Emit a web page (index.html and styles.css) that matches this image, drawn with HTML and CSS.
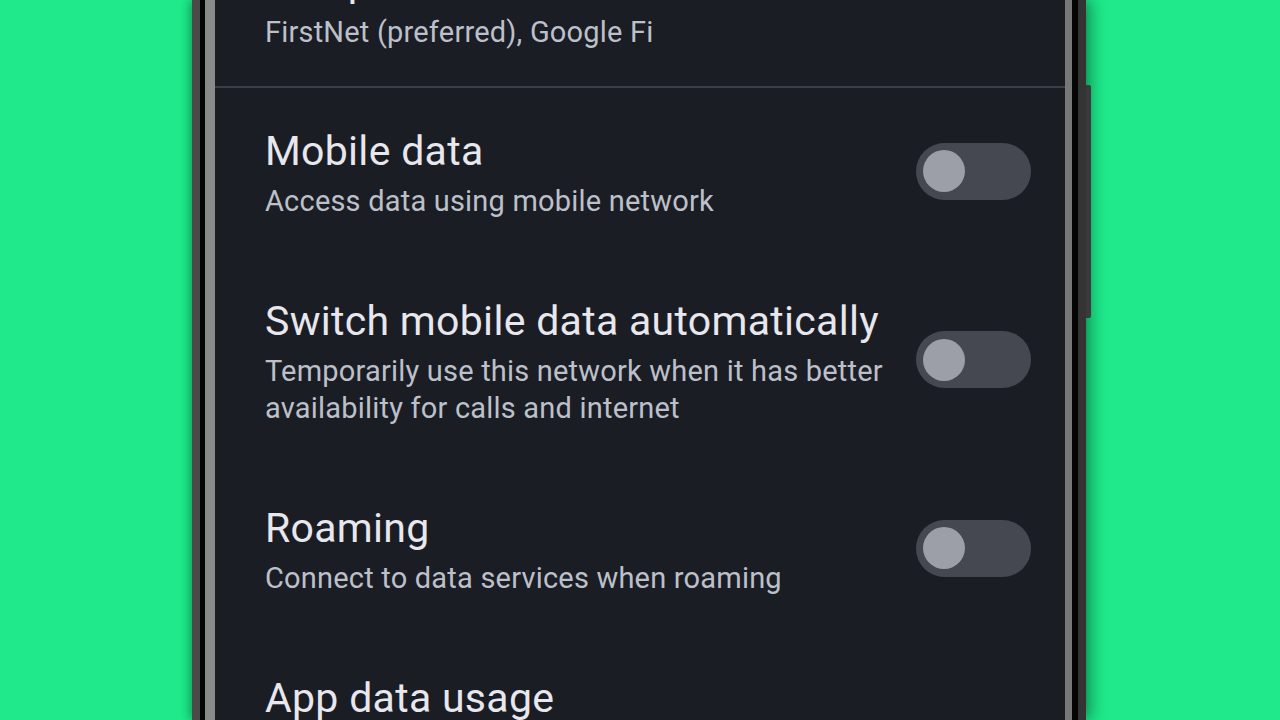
FILE: index.html
```html
<!DOCTYPE html>
<html lang="en">
<head>
<meta charset="utf-8">
<title>SIM settings</title>
<link rel="stylesheet" href="styles.css">
</head>
<body>
<div class="stage">
  <div class="phone">
    <div class="side-button"></div>
    <div class="bezel">
      <div class="screen">
        <div class="list">
          <div class="item item-first">
            <div class="text">
              <div class="title">SIM preferences</div>
              <div class="summary">FirstNet (preferred), Google Fi</div>
            </div>
          </div>
          <div class="divider"></div>
          <div class="item">
            <div class="text">
              <div class="title">Mobile data</div>
              <div class="summary">Access data using mobile network</div>
            </div>
            <div class="toggle"><div class="thumb"></div></div>
          </div>
          <div class="item">
            <div class="text">
              <div class="title">Switch mobile data automatically</div>
              <div class="summary">Temporarily use this network when it has better availability for calls and internet</div>
            </div>
            <div class="toggle"><div class="thumb"></div></div>
          </div>
          <div class="item">
            <div class="text">
              <div class="title">Roaming</div>
              <div class="summary">Connect to data services when roaming</div>
            </div>
            <div class="toggle"><div class="thumb"></div></div>
          </div>
          <div class="item">
            <div class="text">
              <div class="title">App data usage</div>
              <div class="summary">0 B used</div>
            </div>
          </div>
        </div>
      </div>
    </div>
  </div>
</div>
</body>
</html>
```

FILE: styles.css
```css
html, body {
  margin: 0;
  padding: 0;
}
body {
  width: 1280px;
  height: 720px;
  overflow: hidden;
  background: #1fe98b;
  font-family: Roboto, "Noto Sans", sans-serif;
}
.stage {
  height: 720px;
  display: flex;
  padding-left: 192px;
}
.phone {
  position: relative;
  width: 894px;
  height: 720px;
  box-sizing: border-box;
  background: #050505;
  border-left: 8px solid #4a4a4a;
  border-right: 8px solid #343434;
  box-shadow: 6px 0 14px rgba(0, 60, 30, 0.45), -3px 0 8px rgba(0, 60, 30, 0.3);
}
.side-button {
  position: absolute;
  right: -13px;
  top: 85px;
  width: 5px;
  height: 233px;
  background: #3a3a3a;
  border-radius: 0 2px 2px 0;
}
.bezel {
  height: 100%;
  margin-left: 5px;
  margin-right: 6px;
  border-left: 10px solid #8a8a8a;
  border-right: 7px solid #777;
  box-sizing: border-box;
}
.screen {
  height: 100%;
  background: #1b1d24;
  overflow: hidden;
}
.list {
  margin-top: -80px;
  display: flex;
  flex-direction: column;
}
.item {
  display: flex;
  align-items: center;
  padding: 38px 34px 39px 50px;
  gap: 24px;
}
.item-first {
  padding-bottom: 35px;
}
.text {
  flex: 1;
  display: flex;
  flex-direction: column;
  gap: 8px;
}
.title {
  font-size: 41px;
  line-height: 48px;
  letter-spacing: 0.3px;
  color: #e7e7ed;
}
.summary {
  font-size: 29px;
  line-height: 37px;
  letter-spacing: 0.2px;
  color: #bcc0ca;
}
.divider {
  height: 2px;
  margin-bottom: 1px;
  background: #3b3e46;
}
.toggle {
  flex: none;
  width: 115px;
  height: 57px;
  margin-bottom: 5px;
  border-radius: 29px;
  background: #464851;
  display: flex;
  align-items: center;
  padding-left: 7px;
  box-sizing: border-box;
}
.thumb {
  width: 42px;
  height: 42px;
  border-radius: 50%;
  background: #9c9ea8;
}
```
